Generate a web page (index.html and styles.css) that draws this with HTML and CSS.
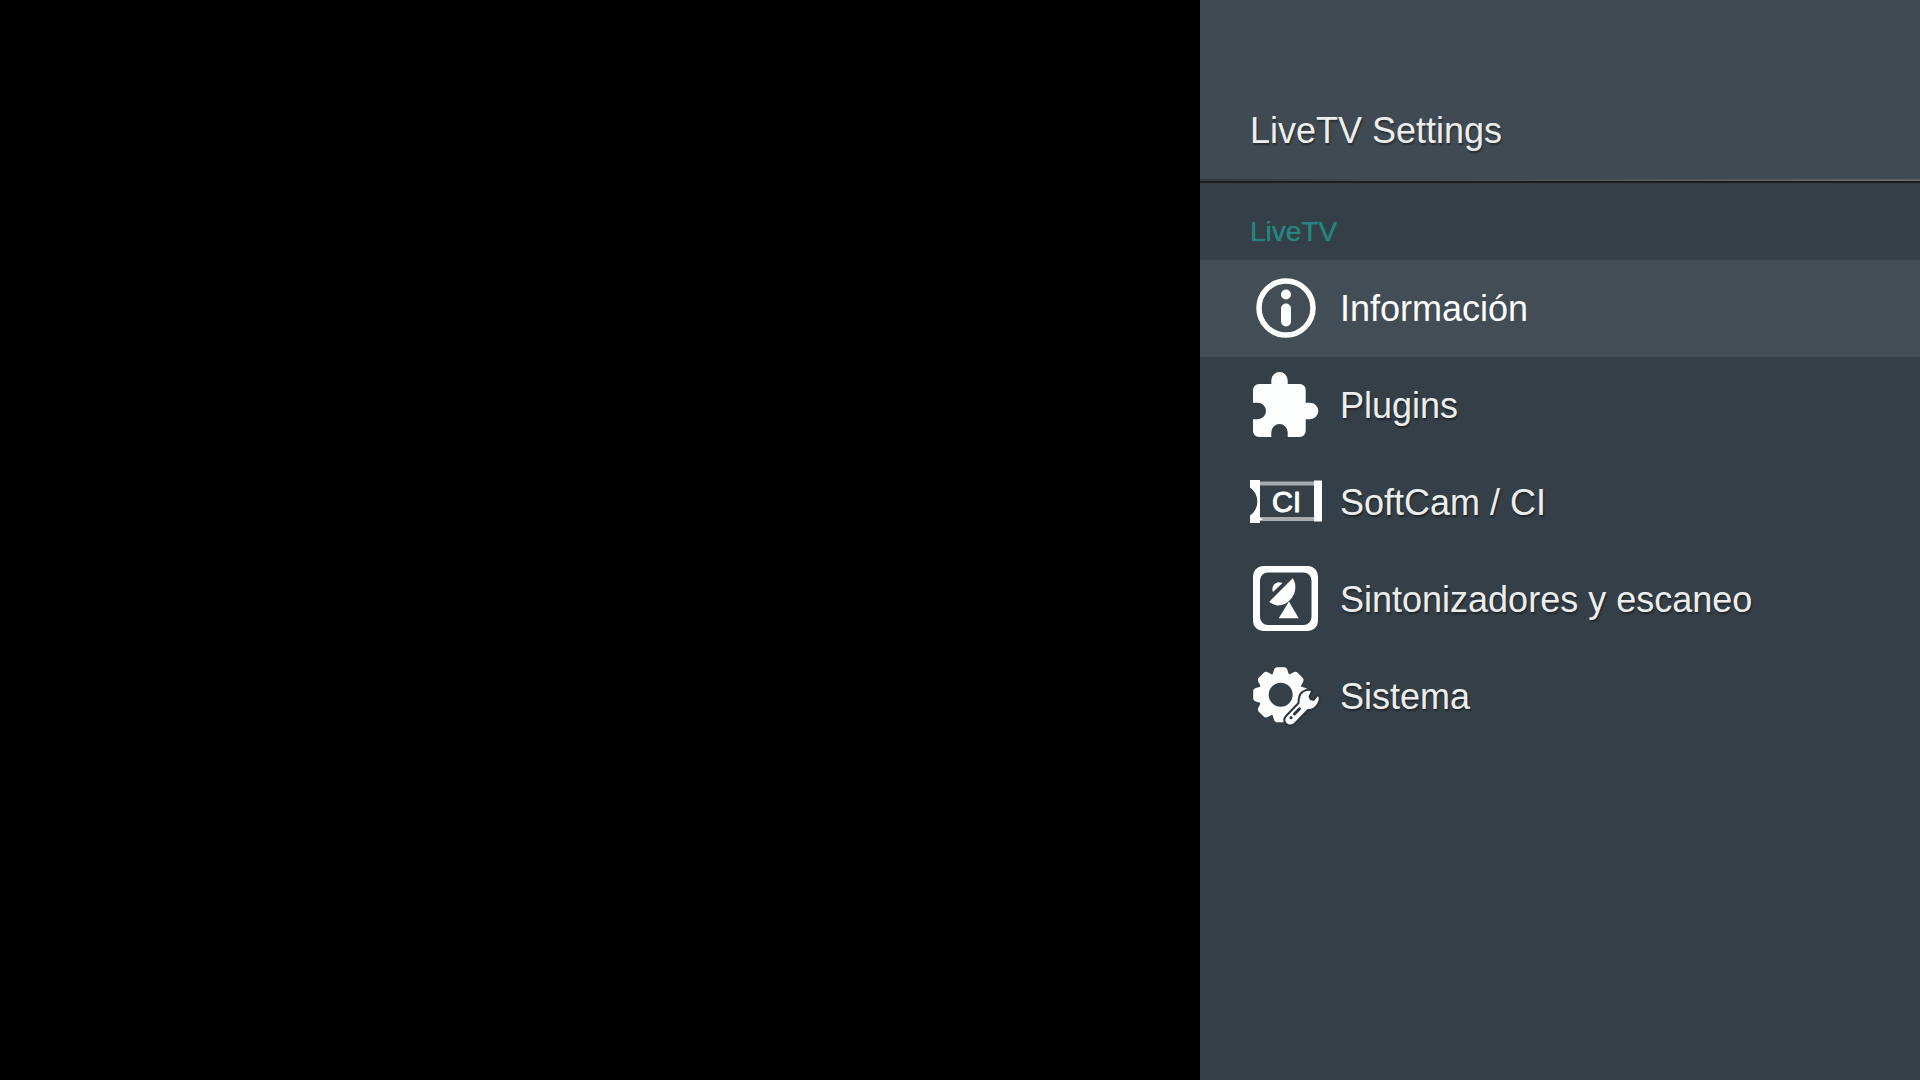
FILE: index.html
```
<!DOCTYPE html>
<html lang="es">
<head>
  <meta charset="UTF-8">
  <meta name="viewport" content="width=device-width, initial-scale=1.0">
  <title>LiveTV Settings</title>
  <link rel="stylesheet" href="styles.css">
</head>
<body>

  <main class="screen">
    <aside class="panel">
      <header class="panel-header">
        <h1>LiveTV Settings</h1>
      </header>

      <h2 class="section-title" id="section-livetv">LiveTV</h2>

      <ul class="menu" aria-labelledby="section-livetv">
        <li>
          <button class="menu-item selected" type="button">
            <svg class="icon" viewBox="0 0 72 72" aria-hidden="true">
              <circle cx="36" cy="36" r="27" fill="none" stroke="currentColor" stroke-width="5.5"/>
              <circle cx="36" cy="22.5" r="5"/>
              <rect x="31" y="31.5" width="10" height="23" rx="5"/>
            </svg>
            <span>Información</span>
          </button>
        </li>
        <li>
          <button class="menu-item" type="button">
            <svg class="icon" viewBox="0 0 72 72" aria-hidden="true">
              <path d="M9 15H21.3V11.2a8.2 8.2 0 0 1 16.4 0V15H50a5.7 5.7 0 0 1 5.7 5.7V33.7H60a8.3 8.3 0 0 1 0 16.6H55.7V62a6 6 0 0 1-6 6H37.7V63.2a8.2 8.2 0 0 0-16.4 0V68H9a6 6 0 0 1-6-6V50.3H7.7a8.3 8.3 0 0 0 0-16.6H3V21a6 6 0 0 1 6-6z"/>
            </svg>
            <span>Plugins</span>
          </button>
        </li>
        <li>
          <button class="menu-item" type="button">
            <svg class="icon" viewBox="0 0 72 72" aria-hidden="true">
              <path class="icon-dim" d="M9 15.5H65V19.5H9zM9 51H65V55H9z"/>
              <path d="M0 14H10V51L13 54H10V57H0V49.5A17 17 0 0 0 0 21.5zM64 14.5H72V55.5H64z"/>
              <text class="icon-text" x="22" y="46">CI</text>
            </svg>
            <span>SoftCam / CI</span>
          </button>
        </li>
        <li>
          <button class="menu-item" type="button">
            <svg class="icon" viewBox="0 0 72 72" aria-hidden="true">
              <path fill-rule="evenodd" d="M13 3H58a10 10 0 0 1 10 10V58a10 10 0 0 1-10 10H13a10 10 0 0 1-10-10V13A10 10 0 0 1 13 3zM18 9.5a8 8 0 0 0-8 8V54a8 8 0 0 0 8 8H53.5a8 8 0 0 0 8-8V17.5a8 8 0 0 0-8-8z"/>
              <path d="M19.3 38.7L42.7 15.3C47 21 46 31 40.5 36.5C34.5 43.5 25 44.5 19.3 38.7z"/>
              <path d="M23 29C20.5 23.5 25.5 17 32.5 20z"/>
              <path d="M39 38.5L48.7 55.3H28.7z"/>
            </svg>
            <span>Sintonizadores y escaneo</span>
          </button>
        </li>
        <li>
          <button class="menu-item" type="button">
            <svg class="icon" viewBox="0 0 72 72" aria-hidden="true">
              <defs>
                <path id="tooth" d="M-8.5 -19L-7 -24Q-6.2 -27.5 -3.5 -27.5H3.5Q6.2 -27.5 7 -24L8.5 -19z"/>
              </defs>
              <g transform="translate(30.7 34.7)">
                <circle r="17" fill="none" stroke="currentColor" stroke-width="10"/>
                <use href="#tooth"/>
                <use href="#tooth" transform="rotate(45)"/>
                <use href="#tooth" transform="rotate(90)"/>
                <use href="#tooth" transform="rotate(135)"/>
                <use href="#tooth" transform="rotate(180)"/>
                <use href="#tooth" transform="rotate(225)"/>
                <use href="#tooth" transform="rotate(270)"/>
                <use href="#tooth" transform="rotate(315)"/>
              </g>
              <path class="wrench" d="M61 31L58.5 36.5L60 40L64 41L68 36Q70 39.5 66.5 44.5Q63 49.5 57.5 49L44 63Q40 66 36.5 63Q34 60 36.5 57L49.5 43.5Q49.5 36 52.5 33Q56.5 30 61 31z"/>
              <path class="wrench-slot" d="M44.5 54L49.5 48.8M41 57.6V57.7"/>
            </svg>
            <span>Sistema</span>
          </button>
        </li>
      </ul>
    </aside>
  </main>

</body>
</html>
```
FILE: styles.css
```
* {
  box-sizing: border-box;
}

body {
  margin: 0;
  background-color: #000;
  color: #eceeee;
  font-family: "Liberation Sans", Arial, sans-serif;
}

.screen {
  display: flex;
  justify-content: flex-end;
  min-height: 100vh;
}

.panel {
  width: 37.5%;
  background-color: #353f47;
}

h1,
h2 {
  margin: 0;
  font-weight: normal;
}

/* thin highlight over the divider, fades in to the right */
.panel-header {
  padding: 110px 50px 30px;
  background: #404a52 linear-gradient(to right, #343c43, #62686a) no-repeat bottom / 100% 2px;
  border-bottom: 2px solid #1b1e20;
}

.panel-header h1 {
  font-size: 36px;
  line-height: 41px;
  text-shadow: 1px 2px 2px rgba(0, 0, 0, 0.4);
}

.section-title {
  padding: 33px 50px 12px;
  color: #28847e;
  font-size: 28px;
  line-height: 32px;
  text-shadow: 0 0 1px #28847e;
}

.menu {
  margin: 0;
  padding: 0;
  list-style: none;
}

.menu-item {
  display: flex;
  align-items: center;
  gap: 18px;
  width: 100%;
  padding: 12px 50px 13px;
  border: none;
  background: none;
  color: #eceeee;
  font-family: inherit;
  font-size: 36px;
  line-height: 42px;
  text-align: left;
  text-shadow: 1px 2px 2px rgba(0, 0, 0, 0.4);
  cursor: pointer;
}

.menu-item span {
  padding-top: 2px;
}

.menu-item.selected {
  background-color: #434d55;
  color: #fafcfd;
  text-shadow: none;
}

.icon {
  flex: none;
  width: 72px;
  height: 72px;
  color: #fcfefd;
  fill: currentColor;
}

.icon-dim {
  fill: #a5abae;
}

.icon-text {
  font-size: 29px;
  stroke: currentColor;
  stroke-width: 1;
  stroke-linejoin: round;
  text-shadow: none;
}

.wrench {
  stroke: #2d353c;
  stroke-width: 4;
  stroke-linejoin: round;
  paint-order: stroke;
}

.wrench-slot {
  fill: none;
  stroke: #2d353c;
  stroke-width: 3;
  stroke-linecap: round;
}
```
